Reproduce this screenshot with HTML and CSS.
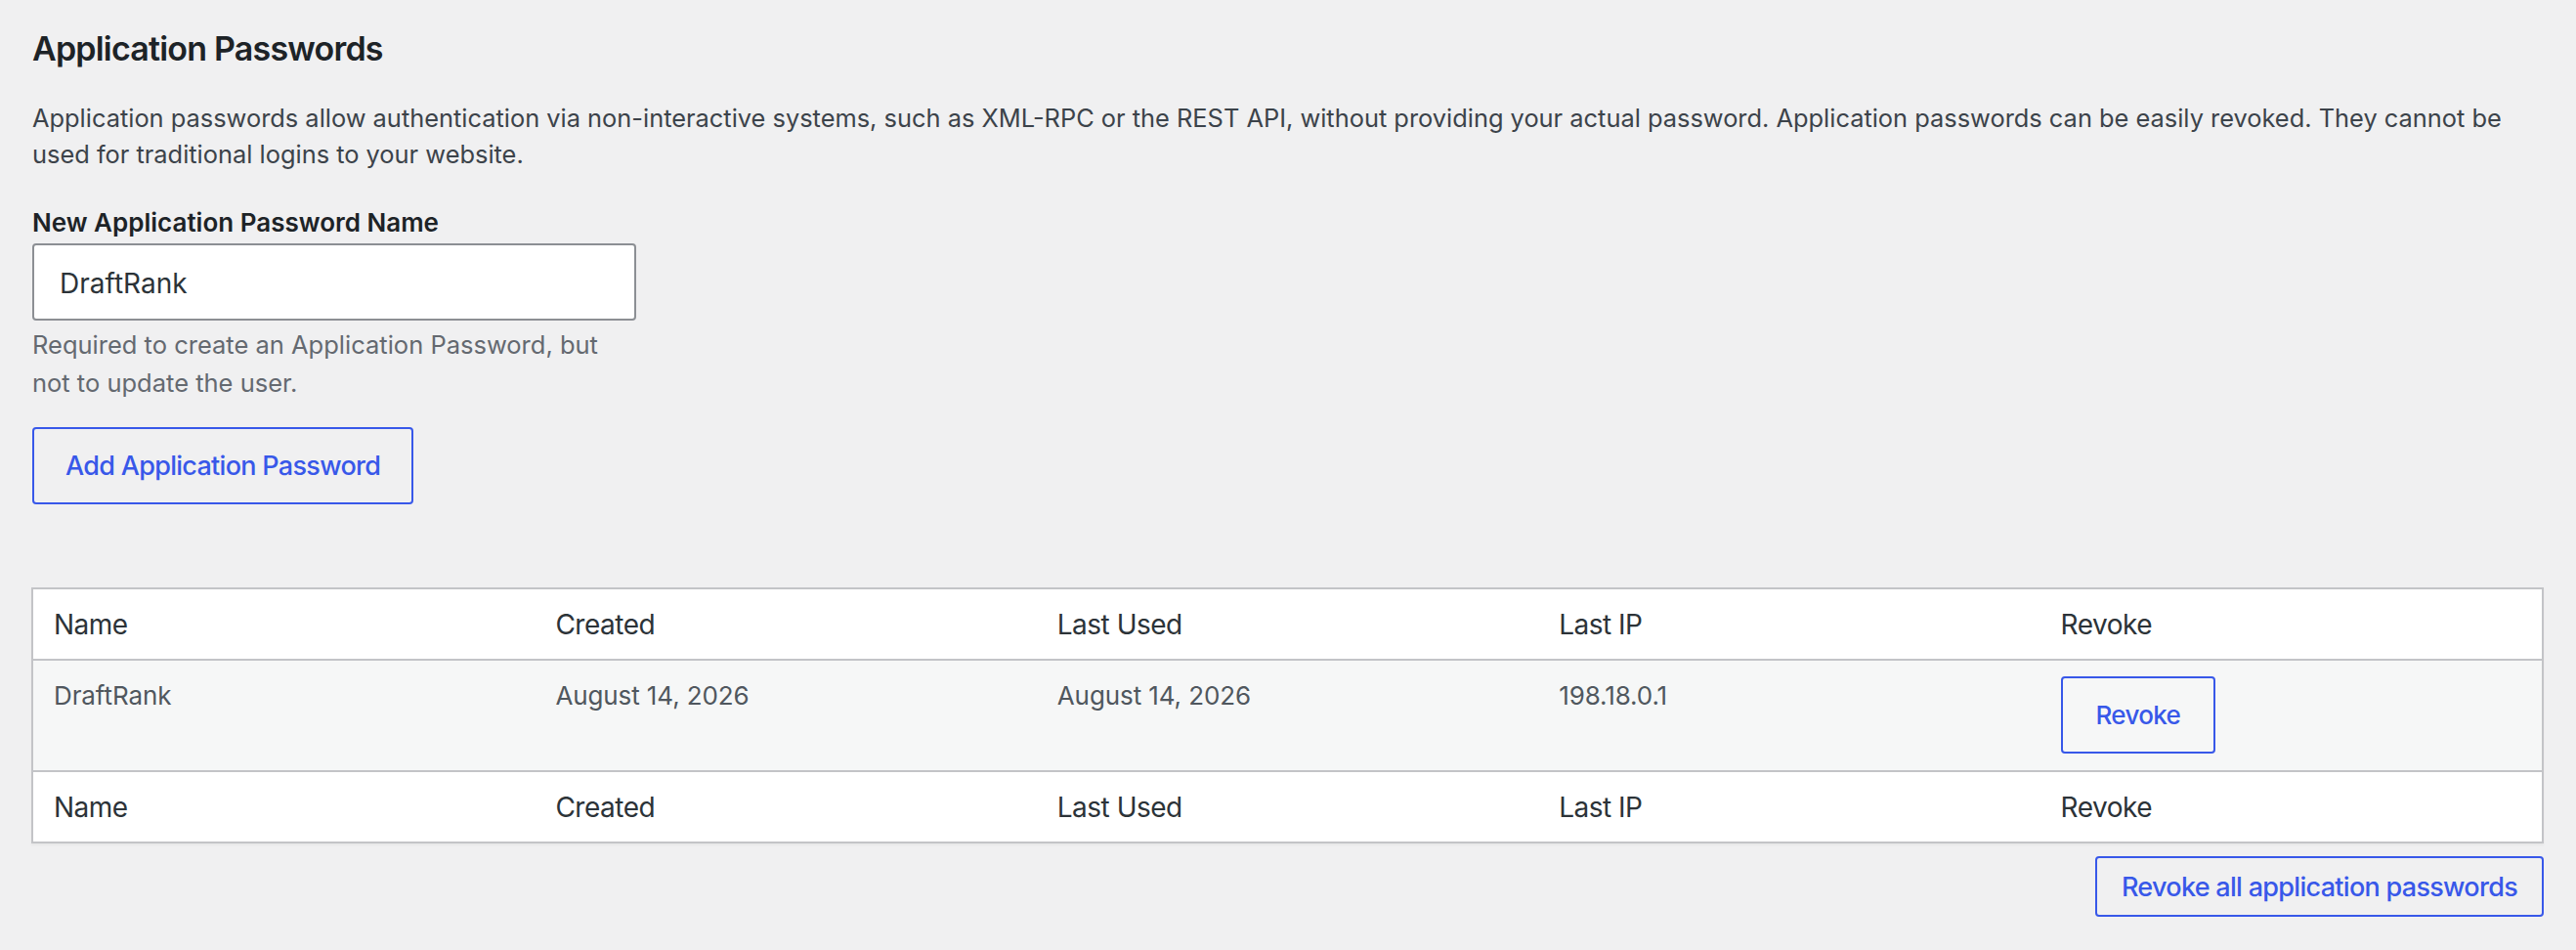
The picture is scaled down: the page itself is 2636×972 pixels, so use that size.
FILE: index.html
```html
<!DOCTYPE html>
<html lang="en">
<head>
<meta charset="utf-8">
<title>Application Passwords</title>
<link rel="stylesheet" href="styles.css">
</head>
<body>
<div class="wrap">
  <h2 class="title">Application Passwords</h2>
  <p class="intro">Application passwords allow authentication via non-interactive systems, such as XML-RPC or the REST API, without providing your actual password. Application passwords can be easily revoked. They cannot be used for traditional logins to your website.</p>
  <div class="create">
    <label class="field-label" for="new_application_password_name">New Application Password Name</label>
    <input type="text" id="new_application_password_name" class="text-input" value="DraftRank">
    <p class="description">Required to create an Application Password, but not to update the user.</p>
    <button type="button" class="btn btn-add">Add Application Password</button>
  </div>
  <table class="list-table">
    <thead>
      <tr><th>Name</th><th>Created</th><th>Last Used</th><th>Last IP</th><th>Revoke</th></tr>
    </thead>
    <tbody>
      <tr>
        <td>DraftRank</td>
        <td>August 14, 2026</td>
        <td>August 14, 2026</td>
        <td>198.18.0.1</td>
        <td><button type="button" class="btn btn-revoke">Revoke</button></td>
      </tr>
    </tbody>
    <tfoot>
      <tr><th>Name</th><th>Created</th><th>Last Used</th><th>Last IP</th><th>Revoke</th></tr>
    </tfoot>
  </table>
  <div class="tablenav">
    <button type="button" class="btn btn-revoke-all">Revoke all application passwords</button>
  </div>
</div>
</body>
</html>
```
FILE: styles.css
```css
html, body {
  margin: 0;
  padding: 0;
}
body {
  background: #f0f0f1;
  font-family: Inter, "Noto Sans", "Liberation Sans", sans-serif;
  color: #3c434a;
}
.wrap {
  padding: 0 33px 0 32px;
}
.title {
  margin: 28px 0 0 1px;
  font-size: 34px;
  line-height: 44px;
  font-weight: 600;
  letter-spacing: -0.8px;
  color: #1d2327;
}
.intro {
  margin: 30px 0 0 1px;
  font-size: 25.4px;
  line-height: 37px;
  color: #3c434a;
}
.create {
  display: flex;
  flex-direction: column;
  align-items: flex-start;
  padding-left: 1px;
}
.field-label {
  margin-top: 34px;
  font-size: 26px;
  line-height: 36px;
  font-weight: 600;
  color: #1d2327;
}
.text-input {
  margin: 3px 0 0;
  box-sizing: border-box;
  width: 618px;
  height: 79px;
  padding: 3px 26px 0;
  border: 2px solid #8c8f94;
  border-radius: 4px;
  background: #ffffff;
  font-family: inherit;
  font-size: 28px;
  color: #2c3338;
  outline: none;
}
.description {
  margin: 5px 0 0;
  max-width: 618px;
  font-size: 25.5px;
  line-height: 39px;
  color: #646970;
}
.btn {
  box-sizing: border-box;
  border: 2px solid #3858e9;
  border-radius: 4px;
  background: transparent;
  color: #3858e9;
  font-family: inherit;
  font-weight: 500;
  font-size: 27px;
  letter-spacing: -0.7px;
  cursor: pointer;
}
.btn-add {
  margin-top: 26px;
  height: 79px;
  padding: 0 32px;
}
.list-table {
  margin-top: 85px;
  width: 100%;
  table-layout: fixed;
  border-collapse: separate;
  border-spacing: 0;
  border: 2px solid #c3c4c7;
  background: #ffffff;
  box-shadow: 0 2px 2px rgba(0, 0, 0, 0.04);
}
.list-table th {
  padding: 16px 21px 15px;
  text-align: left;
  font-weight: 400;
  font-size: 28px;
  line-height: 40px;
  letter-spacing: -0.5px;
  color: #2c3338;
}
.list-table thead th {
  border-bottom: 2px solid #c3c4c7;
}
.list-table tfoot th {
  border-top: 2px solid #c3c4c7;
}
.list-table tbody tr {
  background: #f6f7f7;
}
.list-table td {
  padding: 16px 21px 17px;
  vertical-align: top;
  font-size: 26px;
  line-height: 40px;
  letter-spacing: -0.1px;
  color: #50575e;
}
.btn-revoke {
  display: inline-block;
  vertical-align: top;
  height: 79px;
  padding: 0 34px;
  font-size: 26px;
}
.tablenav {
  display: flex;
  justify-content: flex-end;
  margin-top: 13px;
}
.btn-revoke-all {
  height: 62px;
  padding: 0 25px;
}
```
